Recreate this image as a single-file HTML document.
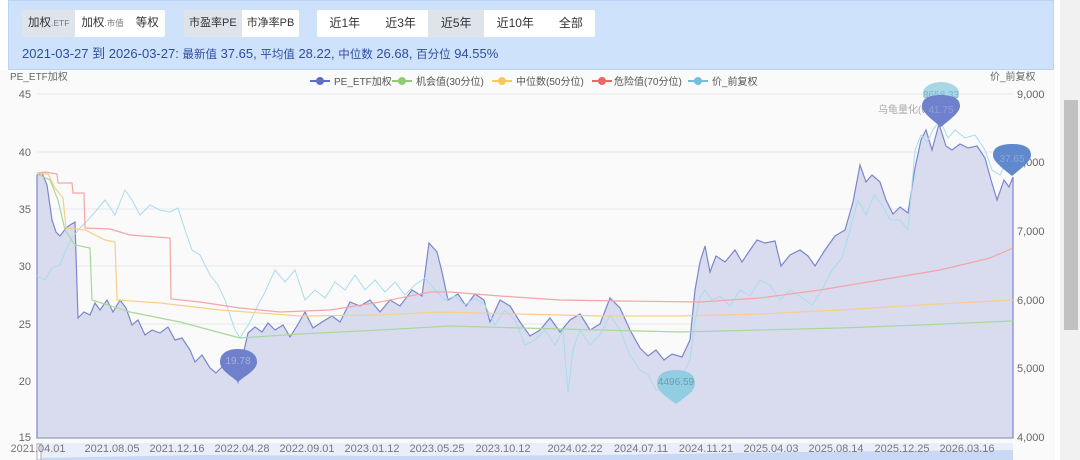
<!DOCTYPE html>
<html><head><meta charset="utf-8">
<style>
*{margin:0;padding:0;box-sizing:border-box}
body{width:1080px;height:460px;overflow:hidden;background:#fff;font-family:"Liberation Sans","Noto Sans CJK SC",sans-serif;position:relative}
.hdr{position:absolute;left:8px;top:0;width:1046px;height:70px;background:#cfe2fb;border:1px solid #b9d3f3}
.grp{position:absolute;top:9px;height:27px;display:flex;background:#fff;border-radius:2px}
.grp span{display:block;height:27px;line-height:27px;font-size:11.5px;color:#333;padding:0 6px;white-space:nowrap}
.grp span.on{background:#dfe3ea}
.grp small{font-size:8.5px;color:#777}
.g2 span{font-size:11px;padding:0 5px}
.g3 span{font-size:12px;padding:0 12.5px}
.info{position:absolute;left:13px;top:42px;font-size:13px;color:#2d4f9e}
.info b{font-weight:normal;font-size:11.5px}
.sb{position:absolute;left:1064px;top:100px;width:14px;height:230px;background:#c1c1c1}
.sbt{position:absolute;left:1060px;top:0;width:20px;height:460px;background:#f1f1f1}
</style></head><body>
<div class="sbt"></div><div class="sb"></div>
<svg width="1060" height="460" style="position:absolute;left:0;top:0" font-family="Liberation Sans, Noto Sans CJK SC, sans-serif">
<rect x="0" y="70" width="1055" height="390" fill="#fafafa"/>
<g stroke="#e8e8ec" stroke-width="1">
<line x1="37" y1="94" x2="1013" y2="94"/><line x1="37" y1="152" x2="1013" y2="152"/><line x1="37" y1="209" x2="1013" y2="209"/><line x1="37" y1="266" x2="1013" y2="266"/><line x1="37" y1="324" x2="1013" y2="324"/><line x1="37" y1="381" x2="1013" y2="381"/>
</g>
<path fill="#d9dcef" stroke="#7b86cc" stroke-width="1.2" d="M37,175 L42,173 L47,185 L52,220 L56,232 L60,236 L66,228 L70,225 L75,222 L78,318 L84,312 L90,315 L95,303 L100,310 L107,300 L113,312 L120,300 L126,308 L132,325 L138,320 L145,335 L152,330 L160,333 L168,327 L175,340 L182,338 L190,350 L195,362 L202,355 L210,368 L216,373 L222,367 L228,370 L232,365 L238,382 L243,355 L248,333 L255,327 L262,332 L268,323 L275,330 L283,325 L290,337 L297,326 L305,312 L313,328 L322,322 L332,316 L340,322 L350,302 L360,306 L370,300 L380,312 L390,300 L400,306 L412,290 L422,296 L429,243 L437,252 L442,272 L448,300 L458,294 L466,306 L475,294 L484,300 L490,322 L500,300 L510,306 L520,322 L530,336 L540,330 L550,318 L560,332 L570,320 L580,314 L590,330 L600,324 L610,298 L620,308 L630,330 L640,348 L648,356 L656,350 L664,360 L672,354 L682,357 L690,340 L695,290 L700,262 L705,246 L710,272 L716,256 L725,262 L735,250 L742,262 L750,250 L757,240 L765,243 L775,241 L781,266 L790,255 L800,250 L808,256 L815,266 L825,250 L835,236 L845,230 L853,202 L860,165 L866,182 L872,175 L880,182 L886,200 L893,214 L900,207 L908,213 L915,168 L921,140 L926,130 L932,150 L939,124 L946,146 L952,150 L960,144 L968,148 L977,146 L985,158 L991,180 L997,200 L1004,180 L1009,187 L1013,177 L1013,438 L37,438 Z"/>
<path fill="none" stroke="#a9dcec" stroke-width="1" d="M37,276 L45,280 L52,268 L60,265 L66,250 L72,238 L80,228 L88,220 L95,212 L105,200 L115,215 L125,190 L132,200 L140,215 L150,205 L160,210 L170,212 L178,208 L185,230 L192,250 L200,255 L210,275 L218,285 L225,300 L235,330 L240,338 L250,322 L258,305 L265,292 L275,270 L285,282 L295,270 L305,300 L315,290 L325,298 L335,282 L345,290 L355,275 L365,290 L375,280 L385,292 L395,282 L405,295 L415,285 L425,278 L435,290 L445,300 L455,296 L465,305 L475,298 L485,305 L495,325 L505,310 L515,320 L525,345 L535,340 L545,330 L555,345 L563,330 L568,393 L573,350 L580,330 L590,345 L600,335 L610,315 L620,330 L630,355 L640,370 L648,375 L656,390 L663,388 L672,398 L680,392 L685,370 L690,360 L695,320 L700,298 L705,290 L712,300 L720,296 L730,306 L740,290 L750,296 L760,280 L770,285 L780,300 L790,290 L800,296 L812,305 L822,290 L832,270 L842,258 L850,230 L858,200 L866,215 L874,195 L882,205 L890,220 L900,220 L908,230 L915,150 L921,135 L927,142 L933,130 L940,120 L948,138 L955,130 L965,138 L975,135 L985,150 L992,170 L1000,175 L1006,162 L1012,158"/>
<path fill="none" stroke="#f2a6a6" stroke-width="1.2" d="M37,173 L45,172 L57,174 L58,183 L72,183 L73,193 L84,193 L85,228 L110,229 L120,232 L130,235 L170,238 L171,299 L200,302 L240,308 L280,312 L330,310 L380,302 L430,292 L450,292 L500,296 L560,300 L620,301 L700,302 L760,298 L820,290 L880,280 L940,270 L990,258 L1013,248"/>
<path fill="none" stroke="#f6cf8a" stroke-width="1.2" d="M37,173 L48,174 L55,188 L63,198 L66,228 L85,230 L105,240 L115,242 L117,300 L160,303 L220,310 L300,316 L380,315 L440,312 L520,314 L600,316 L680,316 L760,314 L840,310 L920,305 L1013,300"/>
<path fill="none" stroke="#a8d89a" stroke-width="1.2" d="M37,174 L50,180 L58,200 L65,230 L75,245 L90,248 L92,300 L130,312 L180,322 L240,338 L300,334 L380,330 L450,326 L520,328 L600,330 L680,332 L760,330 L840,328 L920,325 L1013,321"/>
<line x1="37" y1="438" x2="1013" y2="438" stroke="#9aa0b8" stroke-width="1"/>
<rect x="37" y="443" width="976" height="17" fill="#e9eefa"/>
<path d="M37,458 L200,455 L400,456 L600,455 L800,452 L1013,450 L1013,460 L37,460Z" fill="#c9d8f4"/>
<rect x="37" y="444" width="4" height="16" fill="#fff" stroke="#aab"/>
<g font-size="11" fill="#666" text-anchor="end">
<text x="31" y="98">45</text><text x="31" y="156">40</text><text x="31" y="213">35</text><text x="31" y="270">30</text><text x="31" y="328">25</text><text x="31" y="385">20</text><text x="31" y="441">15</text>
</g>
<g font-size="11" fill="#666">
<text x="1017" y="98">9,000</text><text x="1017" y="235">7,000</text><text x="1017" y="304">6,000</text><text x="1017" y="372">5,000</text><text x="1017" y="441">4,000</text><text x="1017" y="166">8,000</text>
<text x="10" y="80" font-size="10">PE_ETF加权</text><text x="990" y="80" font-size="10">价_前复权</text>
</g>
<g font-size="11" fill="#777" text-anchor="middle">
<text x="38" y="452">2021.04.01</text><text x="112" y="452">2021.08.05</text><text x="177" y="452">2021.12.16</text><text x="242" y="452">2022.04.28</text><text x="307" y="452">2022.09.01</text><text x="372" y="452">2023.01.12</text><text x="437" y="452">2023.05.25</text><text x="503" y="452">2023.10.12</text><text x="575" y="452">2024.02.22</text><text x="641" y="452">2024.07.11</text><text x="706" y="452">2024.11.21</text><text x="771" y="452">2025.04.03</text><text x="836" y="452">2025.08.14</text><text x="902" y="452">2025.12.25</text><text x="967" y="452">2026.03.16</text>
</g>
<g font-size="10" fill="#555">
<line x1="310" y1="81" x2="330" y2="81" stroke="#5c6fc2" stroke-width="2"/><circle cx="320" cy="81" r="4" fill="#5c6fc2"/><text x="334" y="85">PE_ETF加权</text>
<line x1="392" y1="81" x2="412" y2="81" stroke="#91cc75" stroke-width="2"/><circle cx="402" cy="81" r="4" fill="#91cc75"/><text x="416" y="85">机会值(30分位)</text>
<line x1="492" y1="81" x2="512" y2="81" stroke="#fac858" stroke-width="2"/><circle cx="502" cy="81" r="4" fill="#fac858"/><text x="516" y="85">中位数(50分位)</text>
<line x1="592" y1="81" x2="612" y2="81" stroke="#ee6666" stroke-width="2"/><circle cx="602" cy="81" r="4" fill="#ee6666"/><text x="614" y="85">危险值(70分位)</text>
<line x1="688" y1="81" x2="708" y2="81" stroke="#73c0de" stroke-width="2"/><circle cx="698" cy="81" r="4" fill="#73c0de"/><text x="712" y="85">价_前复权</text>
</g>
<text x="878" y="113" font-size="10" fill="#aaa">乌龟量化(wg...m)</text>
<g font-size="10" text-anchor="middle">
<ellipse cx="941" cy="93" rx="18" ry="11" fill="#a8d8e8"/>
<text x="941" y="98" fill="#7fb3c6">8658.33</text>
<path d="M941,127 C930,118 922,112 922,106 C922,98 930,95 941,95 C952,95 960,98 960,106 C960,112 952,118 941,127Z" fill="#6f80cc"/>
<text x="941" y="113" fill="#8fa0dc">41.75</text>
<path d="M1012,176 C1001,167 993,161 993,155 C993,147 1001,144 1012,144 C1023,144 1031,147 1031,155 C1031,161 1023,167 1012,176Z" fill="#5f89cc"/>
<text x="1012" y="162" fill="#8aa8dc">37.65</text>
<path d="M238,382 C230,375 220,370 220,362 C220,353 228,349 238,349 C248,349 257,353 257,362 C257,370 246,375 238,382Z" fill="#6f80cc"/>
<text x="238" y="364" fill="#a6b2e2">19.78</text>
<path d="M676,404 C667,397 657,392 657,383 C657,374 665,370 676,370 C687,370 695,374 695,383 C695,392 685,397 676,404Z" fill="#92cde2"/>
<text x="676" y="385" fill="#6a9cb2">4496.59</text>
</g>
</svg>
<div class="hdr">
<div class="grp" style="left:13px"><span class="on">加权<small>.ETF</small></span><span>加权<small>.市值</small></span><span>等权</span></div>
<div class="grp g2" style="left:175px"><span class="on">市盈率PE</span><span>市净率PB</span></div>
<div class="grp g3" style="left:308px"><span>近1年</span><span>近3年</span><span class="on">近5年</span><span>近10年</span><span>全部</span></div>
<div class="info">2021-03-27 到 2026-03-27: <b>最新值</b> 37.65, <b>平均值</b> 28.22, <b>中位数</b> 26.68, <b>百分位</b> 94.55%</div>
</div>
</body></html>
